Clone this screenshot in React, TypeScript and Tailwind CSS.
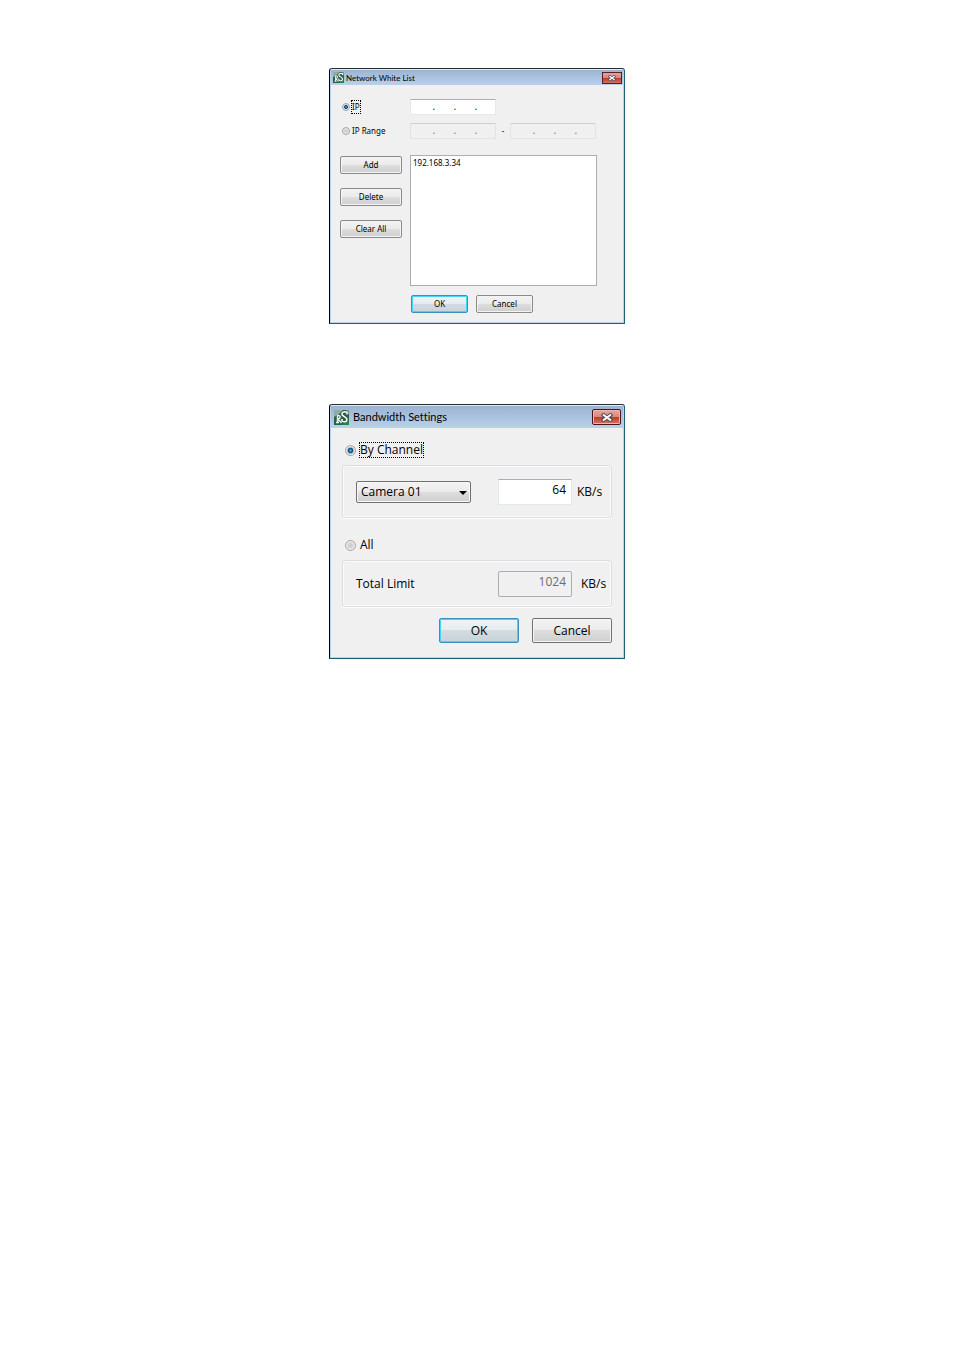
import type { ReactNode } from "react";

const BUTTON =
  "shrink-0 rounded-[2px] border border-[#707070] bg-[linear-gradient(#f3f3f3_0%,#ebebeb_50%,#dddddd_50%,#cfcfcf_100%)] text-center text-black shadow-[inset_0_0_0_1px_#f8f8f8]";
const SMALL_BUTTON =
  "shrink-0 rounded-[2px] border border-[#8a8a8a] bg-[linear-gradient(#f3f3f3_0%,#ebebeb_50%,#dddddd_50%,#cfcfcf_100%)] text-center text-black shadow-[inset_0_0_0_1px_#f4f4f4]";
const DEFAULT_BUTTON =
  "shrink-0 rounded-[2px] border border-[#3c8fc1] bg-[linear-gradient(#f0f4f6_0%,#e6ebee_50%,#d2dbe1_50%,#c8d4d8_100%)] text-center text-black shadow-[inset_0_0_0_1px_#46d2fa]";
const RADIO =
  "shrink-0 appearance-none rounded-full border border-[#a0a2a4] bg-[radial-gradient(circle,#cdd0d3_30%,#f4f4f4_75%)] checked:bg-[radial-gradient(circle,#4fb0e0_0%,#0f4a78_38%,#d5dade_52%,#f4f4f4_80%)]";
const GROUP = "rounded-[3px] border border-[#d5dfe5] shadow-[inset_0_0_0_1px_#fbfbfb,0_1px_0_#ffffff]";

function Logo({ className }: { className: string }) {
  return (
    <svg viewBox="0 0 15 15" className={className} aria-hidden="true">
      <rect width="15" height="15" fill="#2c5f49" />
      <path d="M0 0h9L5 4 0 7z" fill="#8fae9f" />
      <path d="M12 0h3v5z" fill="#6f9a84" />
      <path d="M7 15l3-2 5-2v4z" fill="#1c8a4c" />
      <path d="M2 12.500h3M3.500 12V5.500M3 5.500c4-1 4 3 1 3.500l3.500 4" fill="none" stroke="#e9f3ee" strokeWidth="1.4" />
      <path d="M13 4.500V2.500C10 1 7.500 2.500 8 4.500s5 2.500 5 5-3 3-5 1.500v-2" fill="none" stroke="#fff" strokeWidth="1.5" />
    </svg>
  );
}

function CloseIcon({ className }: { className: string }) {
  return (
    <svg viewBox="0 0 12 9" className={className} aria-hidden="true">
      <path d="M1 1l10 7M11 1L1 8" stroke="#4a4f5c" strokeWidth="4" />
      <path d="M2 1.500l8 6M10 1.500l-8 6" stroke="#fff" strokeWidth="2" />
    </svg>
  );
}

function Dialog({ title, small, children }: { title: string; small?: boolean; children: ReactNode }) {
  return (
    <section
      aria-label={title}
      className="w-[296px] rounded-t-[3px] border border-t-[#2b2f33] border-r-[#1d6376] border-b-[#1d6376] border-l-black bg-[#b9d1ea] px-px pb-px"
    >
      <header
        className={
          small
            ? "flex h-4 items-center gap-[2px] border-t border-[#dfe9f4] bg-[linear-gradient(#9ab4d2,#b9d1ea)] pr-px pl-[2px] font-['Lato',sans-serif] [font-variant-ligatures:none]"
            : "flex h-[23px] items-center gap-1 border-t border-[#dfe9f4] bg-[linear-gradient(#9ab4d2,#b9d1ea)] pr-[2px] pl-[3px] font-['Lato',sans-serif] [font-variant-ligatures:none]"
        }
      >
        <Logo className={small ? "size-[11px]" : "size-[15px]"} />
        <h2 className={small ? "grow text-[8px] leading-[10px]" : "grow text-[11px]"}>{title}</h2>
        <button
          type="button"
          aria-label="Close"
          className={
            small
              ? "flex h-3 w-5 items-center justify-center border border-[#5c1d28] bg-[linear-gradient(#e5a59b_0%,#d68577_50%,#bb3b25_50%,#d2705c_100%)]"
              : "flex h-4 w-[29px] items-center justify-center rounded-[2px] border border-[#451620] bg-[linear-gradient(#e8a79d_0%,#d98878_50%,#bb3b25_50%,#d5765f_100%)] shadow-[inset_0_0_0_1px_#efb8ae]"
          }
        >
          <CloseIcon className={small ? "h-[6px] w-[8px]" : "h-[9px] w-[12px]"} />
        </button>
      </header>
      <div className="bg-[#f0f0f0]">{children}</div>
    </section>
  );
}

function IpField({ label, disabled }: { label: string; disabled?: boolean }) {
  return (
    <div
      role="group"
      aria-label={label}
      className={
        disabled
          ? "flex h-4 w-[86px] items-center border border-[#dfe4ea] border-t-[#cfcfcf] bg-[#f0f0f0] pl-[3px] text-[#6d6d6d]"
          : "flex h-4 w-[86px] items-center border border-[#e2e9ef] border-t-[#abadb3] bg-white pl-[3px] text-black"
      }
    >
      {[1, 2, 3, 4].map((n) => (
        <div key={n} className={n < 4 ? "flex w-[21px] items-center" : "flex min-w-0 flex-1 items-center"}>
          <input aria-label={`${label} part ${n}`} disabled={disabled} className="w-full min-w-0 flex-1 text-center" />
          {n < 4 && <span className="font-semibold">.</span>}
        </div>
      ))}
    </div>
  );
}

function WhiteListDialog() {
  return (
    <Dialog title="Network White List" small>
      <form className="px-[9px] pt-[14px] pb-[9px] text-[8px] leading-[12px]">
        <div className="flex h-4 items-center">
          <label className="flex w-[70px] items-center gap-px pl-[2px]">
            <input type="radio" name="mode" defaultChecked className={`${RADIO} size-2`} />
            <span className="border border-dotted border-black">IP</span>
          </label>
          <IpField label="IP" />
        </div>
        <div className="mt-2 flex h-4 items-center">
          <label className="flex w-[70px] items-center gap-[2px] pl-[2px]">
            <input type="radio" name="mode" className={`${RADIO} size-2`} />
            <span>IP Range</span>
          </label>
          <IpField label="Range start" disabled />
          <span className="w-[14px] text-center">-</span>
          <IpField label="Range end" disabled />
        </div>
        <div className="mt-4 flex gap-2">
          <div className="flex flex-col gap-[14px] pt-px">
            <button type="button" className={`${SMALL_BUTTON} h-[18px] w-[62px]`}>Add</button>
            <button type="button" className={`${SMALL_BUTTON} h-[18px] w-[62px]`}>Delete</button>
            <button type="button" className={`${SMALL_BUTTON} h-[18px] w-[62px]`}>Clear All</button>
          </div>
          <ul className="h-[131px] w-[187px] border border-[#abadb3] bg-white px-[2px] py-px">
            <li>192.168.3.34</li>
          </ul>
        </div>
        <div className="mt-[9px] flex gap-2 pl-[71px]">
          <button type="button" className={`${DEFAULT_BUTTON} h-[18px] w-[57px]`}>OK</button>
          <button type="button" className={`${SMALL_BUTTON} h-[18px] w-[57px]`}>Cancel</button>
        </div>
      </form>
    </Dialog>
  );
}

function BandwidthDialog() {
  return (
    <Dialog title="Bandwidth Settings">
      <form className="px-[11px] pt-[14px] pb-[14px] font-['Open_Sans','Noto_Sans',sans-serif] text-[12px] leading-[14px]">
        <label className="flex w-fit items-center gap-[3px] pl-[3px]">
          <input type="radio" name="limit" defaultChecked className={`${RADIO} size-[11px]`} />
          <span className="border border-dotted border-black">By Channel</span>
        </label>
        <div className={`${GROUP} mt-[7px] flex h-[53px] items-center pl-[13px]`}>
          <div className="relative w-[115px]">
            <select aria-label="Camera" className={`${BUTTON} h-[22px] w-full appearance-none pl-[4px] text-left`}>
              <option>Camera 01</option>
            </select>
            <svg viewBox="0 0 8 4" className="pointer-events-none absolute top-[10px] right-1 h-1 w-2" aria-hidden="true">
              <path d="M0 0h8L4 4z" />
            </svg>
          </div>
          <input
            aria-label="Channel limit"
            defaultValue="64"
            className="ml-[27px] h-[26px] w-[74px] border border-[#e2e9ef] border-t-[#abadb3] bg-white pr-[5px] pb-1 text-right"
          />
          <span className="ml-[5px]">KB/s</span>
        </div>
        <label className="mt-5 flex w-fit items-center gap-1 pl-[3px]">
          <input type="radio" name="limit" className={`${RADIO} size-[11px]`} />
          <span>All</span>
        </label>
        <div className={`${GROUP} mt-2 flex h-[47px] items-center pl-[13px]`}>
          <label htmlFor="total" className="w-[142px]">Total Limit</label>
          <input
            id="total"
            disabled
            defaultValue="1024"
            className="h-[26px] w-[74px] rounded-[2px] border border-[#abadb3] pr-[5px] pb-1 text-right text-[#6d6d6d]"
          />
          <span className="ml-[9px]">KB/s</span>
        </div>
        <div className="mt-[11px] flex justify-end gap-[13px]">
          <button type="button" className={`${DEFAULT_BUTTON} h-[25px] w-[80px]`}>OK</button>
          <button type="button" className={`${BUTTON} h-[25px] w-[80px]`}>Cancel</button>
        </div>
      </form>
    </Dialog>
  );
}

export default function App() {
  return (
    <main className="flex min-h-screen flex-col items-center gap-20 bg-white pt-[68px] font-['Noto_Sans',sans-serif] text-black">
      <WhiteListDialog />
      <BandwidthDialog />
    </main>
  );
}
